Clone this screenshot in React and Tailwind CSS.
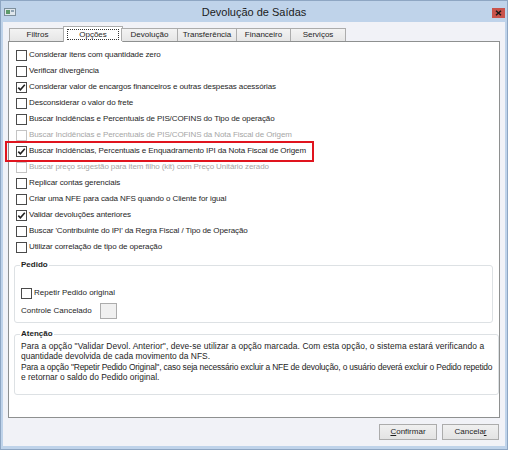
import { useState } from 'react';

const tabs = [
  { label: 'Filtros', w: 56 },
  { label: 'Opções', w: 56 },
  { label: 'Devolução', w: 56 },
  { label: 'Transferência', w: 59 },
  { label: 'Financeiro', w: 54 },
  { label: 'Serviços', w: 56 },
];

const options = [
  { label: 'Considerar itens com quantidade zero' },
  { label: 'Verificar divergência' },
  { label: 'Considerar valor de encargos financeiros e outras despesas acessórias', checked: true },
  { label: 'Desconsiderar o valor do frete' },
  { label: 'Buscar Incidências e Percentuais de PIS/COFINS do Tipo de operação' },
  { label: 'Buscar Incidências e Percentuais de PIS/COFINS da Nota Fiscal de Origem', disabled: true },
  { label: 'Buscar Incidências, Percentuais e Enquadramento IPI da Nota Fiscal de Origem', checked: true, marked: true },
  { label: 'Buscar preço sugestão para item filho (kit) com Preço Unitário zerado', disabled: true },
  { label: 'Replicar contas gerenciais' },
  { label: 'Criar uma NFE para cada NFS quando o Cliente for igual' },
  { label: 'Validar devoluções anteriores', checked: true },
  { label: "Buscar 'Contribuinte do IPI' da Regra Fiscal / Tipo de Operação" },
  { label: 'Utilizar correlação de tipo de operação' },
];

function CheckBox({ checked, disabled }) {
  return (
    <span
      className={`flex h-[11px] w-[11px] shrink-0 items-center justify-center border bg-white ${
        disabled ? 'border-[#c4c4c4]' : 'border-[#4a4a4a]'
      }`}
    >
      {checked && (
        <svg width="9" height="9" viewBox="0 0 9 9">
          <path d="M1.3 4.6 L3.4 6.8 L7.8 1.8" fill="none" stroke="#1f1f1f" strokeWidth="1.6" />
        </svg>
      )}
    </span>
  );
}

function OptionRow({ label, checked, disabled, marked }) {
  return (
    <div className="relative flex h-[16px] items-center gap-[2px] pl-[2px]">
      <CheckBox checked={checked} disabled={disabled} />
      <span className={`whitespace-nowrap tracking-[-0.1px] ${disabled ? 'text-[#a6a6a6]' : 'text-[#1e1e1e]'}`}>
        {label}
      </span>
      {marked && (
        <span className="pointer-events-none absolute left-[-9px] top-[-2px] h-[21px] w-[309px] border-2 border-[#e0141e]" />
      )}
    </div>
  );
}

export default function App() {
  const [active] = useState(1);

  return (
    <div className="flex h-[450px] w-[508px] flex-col border border-[#8ea6c3] bg-[#bfd3ea] font-['Liberation_Sans',Arial,sans-serif] text-[8px] leading-[10px] text-[#1e1e1e]">
      {/* Title bar */}
      <div className="grid h-[21px] grid-cols-[1fr_auto_1fr] items-center">
        <div className="pl-[3px] pt-[1px]">
          <svg width="12" height="8" viewBox="0 0 12 8">
            <rect x="0.5" y="0.5" width="11" height="7" fill="#dfe6ec" stroke="#7d8f9c" />
            <rect x="2" y="2" width="4" height="4" fill="#5d9a6a" />
            <rect x="7" y="2" width="3" height="2" fill="#8fa3b3" />
          </svg>
        </div>
        <div className="text-[11px] leading-[14px] text-[#1b1b1b]">Devolução de Saídas</div>
        <div className="flex justify-end pr-[2px] pt-[2px]">
          <div className="flex h-[10px] w-[13px] items-center justify-center bg-[#c9534c]">
            <svg width="7" height="6" viewBox="0 0 7 6">
              <path d="M1 0.8 L6 5.2 M6 0.8 L1 5.2" stroke="#1a1a1a" strokeWidth="1.5" />
            </svg>
          </div>
        </div>
      </div>

      {/* Body */}
      <div className="mx-[2px] mb-[3px] flex flex-1 flex-col bg-[#f1f2f7]">
        {/* Tabs */}
        <div className="relative z-10 flex items-end pl-[6px] pt-[4px]">
          {tabs.map((t, i) =>
            i === active ? (
              <div
                key={t.label}
                className="-mx-[2px] -mb-px flex h-[16px] items-center justify-center border border-b-0 border-[#acacac] bg-white"
                style={{ width: t.w + 4 }}
              >
                <span className="border border-dotted border-[#333] px-[11px] leading-[9px]">{t.label}</span>
              </div>
            ) : (
              <div
                key={t.label}
                className={`flex h-[13px] items-center justify-center border-t border-l border-[#acacac] bg-gradient-to-b from-[#f3f3f3] to-[#e6e6e6] ${
                  i === tabs.length - 1 ? 'border-r' : ''
                }`}
                style={{ width: t.w }}
              >
                {t.label}
              </div>
            )
          )}
        </div>

        {/* Panel */}
        <div className="mx-[5px] flex flex-1 flex-col border border-[#8e9090] bg-white pl-[5px] pr-[6px] pt-[5px]">
          {options.map((o) => (
            <OptionRow key={o.label} {...o} />
          ))}

          <fieldset className="mt-[5px] rounded-[3px] border border-[#dde1e4] px-[6px] pb-[3px]">
            <legend className="-ml-px px-[1px] font-bold">Pedido</legend>
            <div className="mt-[17px] flex h-[12px] items-center gap-[2px]">
              <CheckBox />
              <span>Repetir Pedido original</span>
            </div>
            <div className="mt-[4px] flex h-[16px] items-center">
              <span className="w-[79px]">Controle Cancelado</span>
              <span className="h-[16px] w-[17px] border border-[#acacac] bg-[#f0f0f0]" />
            </div>
          </fieldset>

          <fieldset className="mt-[6px] rounded-[3px] border border-[#dde1e4] px-[6px] pb-[12px]">
            <legend className="-ml-px px-[1px] font-bold">Atenção</legend>
            <p className="mt-[3px] whitespace-nowrap text-[8.45px] leading-[9.6px]">
              <span className="tracking-[0.08px]">
                Para a opção "Validar Devol. Anterior", deve-se utilizar a opção marcada. Com esta opção, o sistema estará verificando a
              </span>
              <br />
              quantidade devolvida de cada movimento da NFS.
            </p>
            <p className="mt-[2px] whitespace-nowrap text-[8.45px] leading-[9.6px]">
              <span className="tracking-[-0.2px]">
                Para a opção "Repetir Pedido Original", caso seja necessário excluir a NFE de devolução, o usuário deverá excluir o Pedido repetido
              </span>
              <br />
              e retornar o saldo do Pedido original.
            </p>
          </fieldset>
        </div>

        {/* Buttons */}
        <div className="flex justify-end gap-[5px] pb-[6px] pr-[6px] pt-[6px]">
          <button className="h-[16px] w-[58px] border border-[#acacac] bg-gradient-to-b from-[#f0f0f0] to-[#e3e3e3]">
            <span className="underline">C</span>onfirmar
          </button>
          <button className="h-[16px] w-[57px] border border-[#acacac] bg-gradient-to-b from-[#f0f0f0] to-[#e3e3e3]">
            Cancela<span className="underline">r</span>
          </button>
        </div>
      </div>
    </div>
  );
}
